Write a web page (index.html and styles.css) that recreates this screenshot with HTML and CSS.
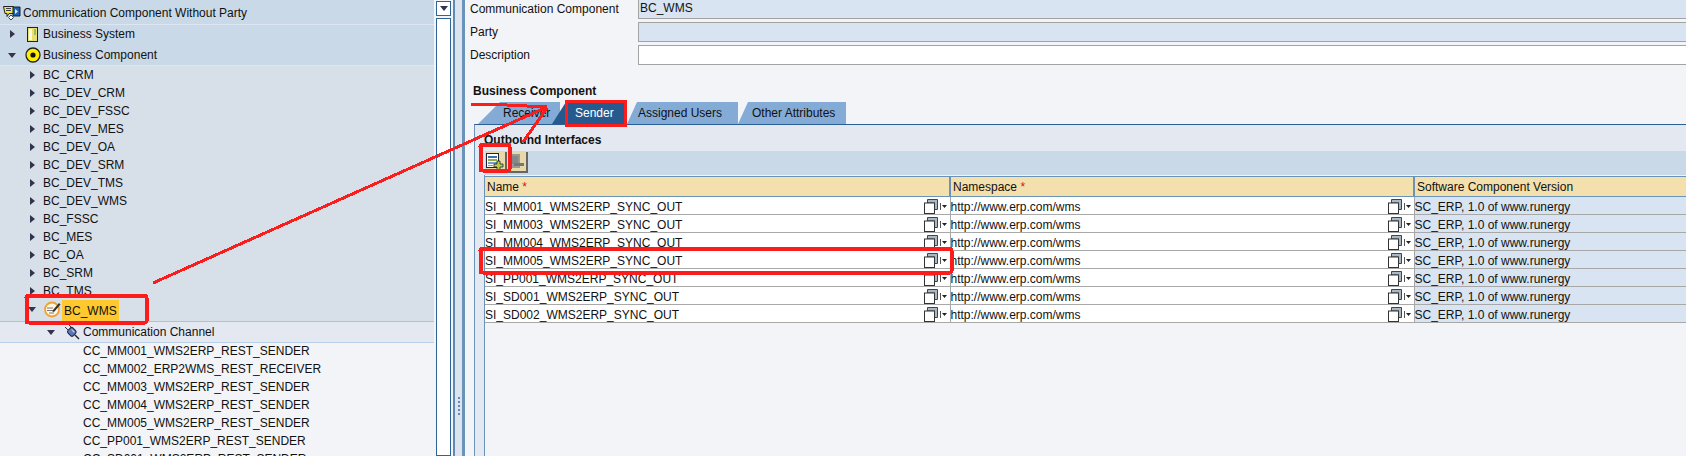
FILE: index.html
```html
<!DOCTYPE html>
<html lang="en">
<head>
  <meta charset="UTF-8" />
  <title>Communication Component</title>
  <link rel="stylesheet" href="styles.css">
</head>
<body>
  <svg class="defs" width="0" height="0">
    <symbol id="copy" viewBox="0 0 23 15">
      <path d="M3.500 4V.5h10v10H10.500V4z" fill="#a9b8c4" stroke="#444"/>
      <rect x=".5" y="4" width="10" height="10.500" fill="#fff" stroke="#333"/>
      <path d="M16.500 4v7" stroke="#555"/>
      <path d="M18 6h5l-2.500 3z" fill="#222"/>
    </symbol>
  </svg>

  <div class="tree">
    <div class="row head top">
      <svg class="icon" width="18" height="16" viewBox="0 0 18 16">
        <path d="M.5 1.500h10v7H6l-2 3v-3H2z" fill="#f6e83a" stroke="#222"/>
        <path d="M3 3.500h5M3 5.500h5" stroke="#444"/>
        <path d="M10 2h7v9h-7z" fill="#1f62b0" stroke="#123"/>
        <path d="M12 4l3 2.500L12 9z" fill="#dfeaf5"/>
        <path d="M8 10l2.500 2.500L8 15l-2.500-2.500z" fill="#fff" stroke="#345"/>
      </svg>
      <span>Communication Component Without Party</span>
    </div>
    <div class="row head l1 sys">
      <i class="tw-r"></i>
      <b class="slot">
        <svg width="11" height="15" viewBox="0 0 11 15">
          <rect x=".5" y=".5" width="10" height="14" fill="#e8e070" stroke="#222"/>
          <rect x="2" y="2" width="3" height="11" fill="#fbfbe0"/>
          <path d="M7 3h2M7 5h2M7 7h2" stroke="#5b9a3a"/>
        </svg>
      </b>
      <span>Business System</span>
    </div>
    <div class="row head l1 last">
      <i class="tw-d"></i>
      <b class="slot">
        <svg width="16" height="16" viewBox="0 0 16 16">
          <circle cx="8" cy="8" r="7" fill="#ffee00" stroke="#222" stroke-width="1.300"/>
          <circle cx="8" cy="8" r="2.600" fill="#111"/>
        </svg>
      </b>
      <span>Business Component</span>
    </div>

    <div class="row item"><i class="tw-r"></i><span>BC_CRM</span></div>
    <div class="row item"><i class="tw-r"></i><span>BC_DEV_CRM</span></div>
    <div class="row item"><i class="tw-r"></i><span>BC_DEV_FSSC</span></div>
    <div class="row item"><i class="tw-r"></i><span>BC_DEV_MES</span></div>
    <div class="row item"><i class="tw-r"></i><span>BC_DEV_OA</span></div>
    <div class="row item"><i class="tw-r"></i><span>BC_DEV_SRM</span></div>
    <div class="row item"><i class="tw-r"></i><span>BC_DEV_TMS</span></div>
    <div class="row item"><i class="tw-r"></i><span>BC_DEV_WMS</span></div>
    <div class="row item"><i class="tw-r"></i><span>BC_FSSC</span></div>
    <div class="row item"><i class="tw-r"></i><span>BC_MES</span></div>
    <div class="row item"><i class="tw-r"></i><span>BC_OA</span></div>
    <div class="row item"><i class="tw-r"></i><span>BC_SRM</span></div>
    <div class="row item"><i class="tw-r"></i><span>BC_TMS</span></div>

    <div class="row sel">
      <i class="tw-d"></i>
      <b class="slot">
        <svg width="17" height="17" viewBox="0 0 17 17">
          <circle cx="8" cy="8.500" r="7" fill="#fdf6e0" stroke="#f0a030" stroke-width="1.800"/>
          <path d="M3 7h6M3 9.500h7M5 12h5" stroke="#777"/>
          <path d="M9 9l6-7 1.500 1.500-6 7-2 .5z" fill="#333"/>
        </svg>
      </b>
      <span class="mark">BC_WMS</span>
    </div>
    <div class="row chan">
      <i class="tw-d"></i>
      <b class="slot">
        <svg width="16" height="16" viewBox="0 0 16 16">
          <path d="M1 3l3 3M4 0l3 3" stroke="#333"/>
          <g transform="rotate(45 8 8)">
            <rect x="4" y="4.500" width="7.500" height="7" rx="2" fill="#5a78c0" stroke="#223"/>
            <path d="M6 6.500h4" stroke="#c9d8f0"/>
          </g>
          <path d="M11 11l4 4" stroke="#222" stroke-width="1.500"/>
        </svg>
      </b>
      <span>Communication Channel</span>
    </div>
    <div class="row leaf"><span>CC_MM001_WMS2ERP_REST_SENDER</span></div>
    <div class="row leaf"><span>CC_MM002_ERP2WMS_REST_RECEIVER</span></div>
    <div class="row leaf"><span>CC_MM003_WMS2ERP_REST_SENDER</span></div>
    <div class="row leaf"><span>CC_MM004_WMS2ERP_REST_SENDER</span></div>
    <div class="row leaf"><span>CC_MM005_WMS2ERP_REST_SENDER</span></div>
    <div class="row leaf"><span>CC_PP001_WMS2ERP_REST_SENDER</span></div>
    <div class="row leaf"><span>CC_SD001_WMS2ERP_REST_SENDER</span></div>
  </div>

  <div class="scrollbar">
    <div class="scroll-btn"><i class="tw-d"></i></div>
    <div class="scroll-track"></div>
  </div>

  <div class="splitter"><div class="grip"></div></div>

  <div class="main">
    <div class="form">
      <label class="first">Communication Component</label>
      <div class="field ro first">BC_WMS</div>
      <label>Party</label>
      <div class="field ro"></div>
      <label>Description</label>
      <div class="field"></div>
    </div>

    <h4 class="section">Business Component</h4>

    <div class="tabs">
      <div class="tab tab-receiver">Receiver</div>
      <div class="tab tab-sender">Sender</div>
      <div class="tab tab-users">Assigned Users</div>
      <div class="tab tab-other">Other Attributes</div>
    </div>

    <div class="panel">
      <h4 class="panel-title">Outbound Interfaces</h4>
      <div class="toolbar">
        <div class="tool">
          <svg width="18" height="17" viewBox="0 0 18 17">
            <rect x=".5" y=".5" width="12" height="14" fill="#fff" stroke="#223"/>
            <path d="M2 3h9v2H2z" fill="#3a6fb0"/>
            <path d="M2 6h9v2H2z" fill="#8ab04a"/>
            <path d="M2 9h9v2H2zM2 12h5v1H2z" fill="#7b9cc8"/>
            <path d="M11 8h3v3h3v3h-3v3h-3v-3H8v-3h3z" fill="#b7cf4a" stroke="#223" stroke-width=".8"/>
          </svg>
        </div>
        <div class="tool">
          <svg width="18" height="17" viewBox="0 0 18 17">
            <rect x="1" y="1" width="12" height="14" fill="#999"/>
            <path d="M3 4h8M3 6h8M3 8h8M3 10h8" stroke="#777"/>
            <rect x="7" y="10" width="10" height="3" fill="#777"/>
          </svg>
        </div>
      </div>

      <div class="table-wrap">
        <table class="grid">
          <colgroup><col class="c-name"><col class="c-ns"><col></colgroup>
          <thead>
            <tr><th>Name <em>*</em></th><th>Namespace <em>*</em></th><th>Software Component Version</th></tr>
          </thead>
          <tbody>
            <tr>
              <td><div class="cell"><span>SI_MM001_WMS2ERP_SYNC_OUT</span><svg class="copy"><use href="#copy"/></svg></div></td>
              <td><div class="cell"><span>http://www.erp.com/wms</span><svg class="copy"><use href="#copy"/></svg></div></td>
              <td class="ver">SC_ERP, 1.0 of www.runergy</td>
            </tr>
            <tr>
              <td><div class="cell"><span>SI_MM003_WMS2ERP_SYNC_OUT</span><svg class="copy"><use href="#copy"/></svg></div></td>
              <td><div class="cell"><span>http://www.erp.com/wms</span><svg class="copy"><use href="#copy"/></svg></div></td>
              <td class="ver">SC_ERP, 1.0 of www.runergy</td>
            </tr>
            <tr>
              <td><div class="cell"><span>SI_MM004_WMS2ERP_SYNC_OUT</span><svg class="copy"><use href="#copy"/></svg></div></td>
              <td><div class="cell"><span>http://www.erp.com/wms</span><svg class="copy"><use href="#copy"/></svg></div></td>
              <td class="ver">SC_ERP, 1.0 of www.runergy</td>
            </tr>
            <tr>
              <td><div class="cell"><span>SI_MM005_WMS2ERP_SYNC_OUT</span><svg class="copy"><use href="#copy"/></svg></div></td>
              <td><div class="cell"><span>http://www.erp.com/wms</span><svg class="copy"><use href="#copy"/></svg></div></td>
              <td class="ver">SC_ERP, 1.0 of www.runergy</td>
            </tr>
            <tr>
              <td><div class="cell"><span>SI_PP001_WMS2ERP_SYNC_OUT</span><svg class="copy"><use href="#copy"/></svg></div></td>
              <td><div class="cell"><span>http://www.erp.com/wms</span><svg class="copy"><use href="#copy"/></svg></div></td>
              <td class="ver">SC_ERP, 1.0 of www.runergy</td>
            </tr>
            <tr>
              <td><div class="cell"><span>SI_SD001_WMS2ERP_SYNC_OUT</span><svg class="copy"><use href="#copy"/></svg></div></td>
              <td><div class="cell"><span>http://www.erp.com/wms</span><svg class="copy"><use href="#copy"/></svg></div></td>
              <td class="ver">SC_ERP, 1.0 of www.runergy</td>
            </tr>
            <tr>
              <td><div class="cell"><span>SI_SD002_WMS2ERP_SYNC_OUT</span><svg class="copy"><use href="#copy"/></svg></div></td>
              <td><div class="cell"><span>http://www.erp.com/wms</span><svg class="copy"><use href="#copy"/></svg></div></td>
              <td class="ver">SC_ERP, 1.0 of www.runergy</td>
            </tr>
          </tbody>
        </table>
      </div>
    </div>
  </div>

  <!-- red markup drawn over the screenshot -->
  <svg class="markup" width="1686" height="456" viewBox="0 0 1686 456">
    <g fill="none" stroke="#fb1c1c" stroke-width="3" shape-rendering="crispEdges">
      <path d="M153 283L547 107M471 104H487L547 107M523 142L547 108"/>
      <rect x="26.500" y="295.500" width="120" height="27" rx="2" stroke-width="4"/>
      <rect x="566.500" y="101.500" width="59" height="24"/>
      <rect x="480.500" y="144.500" width="29" height="26" rx="2" stroke-width="4"/>
      <rect x="480.500" y="248.500" width="471" height="24" rx="2" stroke-width="4"/>
    </g>
  </svg>
</body>
</html>
```

FILE: styles.css
```css
html, body {
  margin: 0;
  height: 456px;
  overflow: hidden;
}
body {
  position: relative;
  display: flex;
  font-family: "Liberation Sans", Arial, sans-serif;
  font-size: 12px;
  color: #111;
  background-color: #f2f4f8;
}
.defs {
  position: absolute;
}

/* tree */
.tree {
  width: 434px;
  flex: none;
  height: 456px;
  overflow: hidden;
  margin-right: 2px;
  background-color: #f2f4f8;
}
.row {
  display: flex;
  align-items: center;
  box-sizing: border-box;
  white-space: nowrap;
}
.row i {
  flex: none;
  width: 20px;
  display: flex;
  justify-content: center;
}
.slot {
  flex: none;
  display: flex;
  justify-content: center;
  font-weight: normal;
}
.tw-r::before {
  content: "";
  border-left: 5px solid #33334d;
  border-top: 4.5px solid transparent;
  border-bottom: 4.5px solid transparent;
}
.tw-d::before {
  content: "";
  border-top: 5px solid #33334d;
  border-left: 4.5px solid transparent;
  border-right: 4.5px solid transparent;
}
.head {
  height: 20px;
  background-color: #c9d9e8;
}
.head.top {
  height: 25px;
  padding: 1px 0 0 3px;
  border-bottom: 1px solid #dde7f3;
}
.head.top .icon {
  margin-right: 2px;
}
.head.l1 {
  padding-left: 2px;
}
.head.l1 .slot {
  width: 21px;
}
.head.sys {
  padding-bottom: 2px;
}
.head.last {
  height: 21px;
  border-bottom: 1px solid #dde7f3;
}
.item {
  height: 18px;
  padding-left: 22px;
  background-color: #d7dfe9;
}
.item i {
  width: 21px;
}
.sel {
  height: 22px;
  padding-left: 22px;
  background-color: #d7dfe9;
  border-bottom: 1px solid #a9c4e0;
  align-items: flex-start;
}
.sel i {
  padding-top: 7px;
}
.sel .slot {
  width: 20px;
  padding-top: 1px;
}
.mark {
  background-color: #ffc82e;
  padding: 1px 2px 0;
  line-height: 20px;
}
.chan {
  height: 21px;
  padding-left: 41px;
  background-color: #e3e8f1;
  border-bottom: 1px solid #b9d0e8;
}
.chan .slot {
  width: 22px;
}
.leaf {
  height: 18px;
  padding-left: 83px;
  padding-bottom: 2px;
}

/* scrollbar and splitter */
.scrollbar {
  width: 15px;
  flex: none;
  padding-top: 1px;
  display: flex;
  flex-direction: column;
  gap: 2px;
}
.scroll-btn, .scroll-track {
  box-sizing: border-box;
  border: 1px solid #2f6496;
  background-color: #fff;
}
.scroll-btn {
  height: 15px;
  display: flex;
  align-items: center;
  justify-content: center;
}
.scroll-btn i {
  display: flex;
}
.scroll-track {
  flex: 1;
}
.splitter {
  width: 12px;
  flex: none;
  box-sizing: border-box;
  margin-left: 2px;
  border-left: 2px solid #5f8ab3;
  border-right: 3px solid #6a93b9;
  background-color: #dde4ee;
  padding: 397px 0 0 3px;
}
.grip {
  height: 20px;
  width: 2px;
  background: repeating-linear-gradient(#5f8ab3 0 2px, transparent 2px 4px);
}

/* right side */
.main {
  flex: 1;
  min-width: 0;
  display: flex;
  flex-direction: column;
}
.form {
  display: grid;
  grid-template-columns: 168px 1fr;
  row-gap: 3px;
  padding-left: 5px;
}
.form label {
  line-height: 20px;
}
.form label.first {
  line-height: 18px;
}
.field {
  box-sizing: border-box;
  height: 20px;
  background-color: #fff;
  border: 1px solid #a3a3a3;
  border-right: 0;
  line-height: 17px;
  padding-left: 1px;
}
.field.ro {
  background-color: #d8e4f2;
}
.field.first {
  height: 19px;
  border-top: 0;
}
.section {
  margin: 19px 0 0 8px;
  font-size: 12px;
  line-height: 15px;
  height: 18px;
}
.tabs {
  display: flex;
  height: 22px;
  margin-left: 13px;
}
.tab {
  box-sizing: border-box;
  height: 22px;
  line-height: 22px;
  background-color: #84abd6;
}
.tab-receiver {
  width: 82px;
  padding-left: 25px;
  clip-path: polygon(0 100%, 22px 0, 100% 0, 100% 100%);
}
.tab-sender {
  width: 74px;
  margin-left: -8px;
  padding-left: 23px;
  color: #fff;
  background-color: #265a8e;
  clip-path: polygon(0 100%, 14px 0, 100% 0, 100% 100%);
}
.tab-users {
  width: 111px;
  margin-left: 1px;
  padding-left: 11px;
  clip-path: polygon(0 100%, 10px 0, 100% 0, 100% 100%);
}
.tab-other {
  width: 108px;
  padding-left: 14px;
  clip-path: polygon(0 100%, 10px 0, 100% 0, 100% 100%);
}
.panel {
  flex: 1;
  margin-left: 9px;
  display: flex;
  flex-direction: column;
  background-color: #e3e8f1;
  border-top: 1px solid #2a5f95;
  border-left: 1px solid #6a93b9;
}
.panel-title {
  margin: 0;
  height: 26px;
  padding-left: 9px;
  font-size: 12px;
  line-height: 31px;
}
.toolbar {
  display: flex;
  height: 24px;
  margin-left: 10px;
  padding-top: 1px;
  box-sizing: border-box;
  background-color: #c9d9e8;
}
.tool {
  box-sizing: border-box;
  width: 21.5px;
  height: 21px;
  display: flex;
  align-items: center;
  justify-content: center;
  background-color: #ead9a8;
  border-right: 2px solid #666;
  border-bottom: 2px solid #666;
}
.table-wrap {
  flex: 1;
  margin-left: 9px;
  padding-top: 1px;
  border-left: 1px solid #6a93b9;
  background-color: #f2f4f8;
}
.grid {
  width: 1202px;
  table-layout: fixed;
  border-collapse: collapse;
  background-color: #fff;
}
.c-name {
  width: 465px;
}
.c-ns {
  width: 464px;
}
.grid th {
  height: 20px;
  padding: 1px 0 0 2px;
  box-sizing: border-box;
  text-align: left;
  font-weight: normal;
  background-color: #f3e0ad;
  border-top: 1px solid #6a93b9;
  border-bottom: 1px solid #6a93b9;
  border-right: 2px solid #6a93b9;
}
.grid th:last-child {
  border-right: 0;
}
.grid em {
  color: #c02020;
  font-style: normal;
}
.grid td {
  height: 18px;
  padding: 2px 0 0 0;
  box-sizing: border-box;
  border-bottom: 1px solid #a8a8a8;
  border-right: 1px solid #a8a8a8;
  white-space: nowrap;
  overflow: hidden;
}
.grid td.ver {
  background-color: #d8e4f2;
  border-right: 0;
}
.cell {
  display: flex;
  align-items: center;
  justify-content: space-between;
}
.copy {
  width: 23px;
  height: 15px;
  flex: none;
  margin-right: 3px;
}

/* annotations */
.markup {
  position: absolute;
  left: 0;
  top: 0;
  pointer-events: none;
}
```
